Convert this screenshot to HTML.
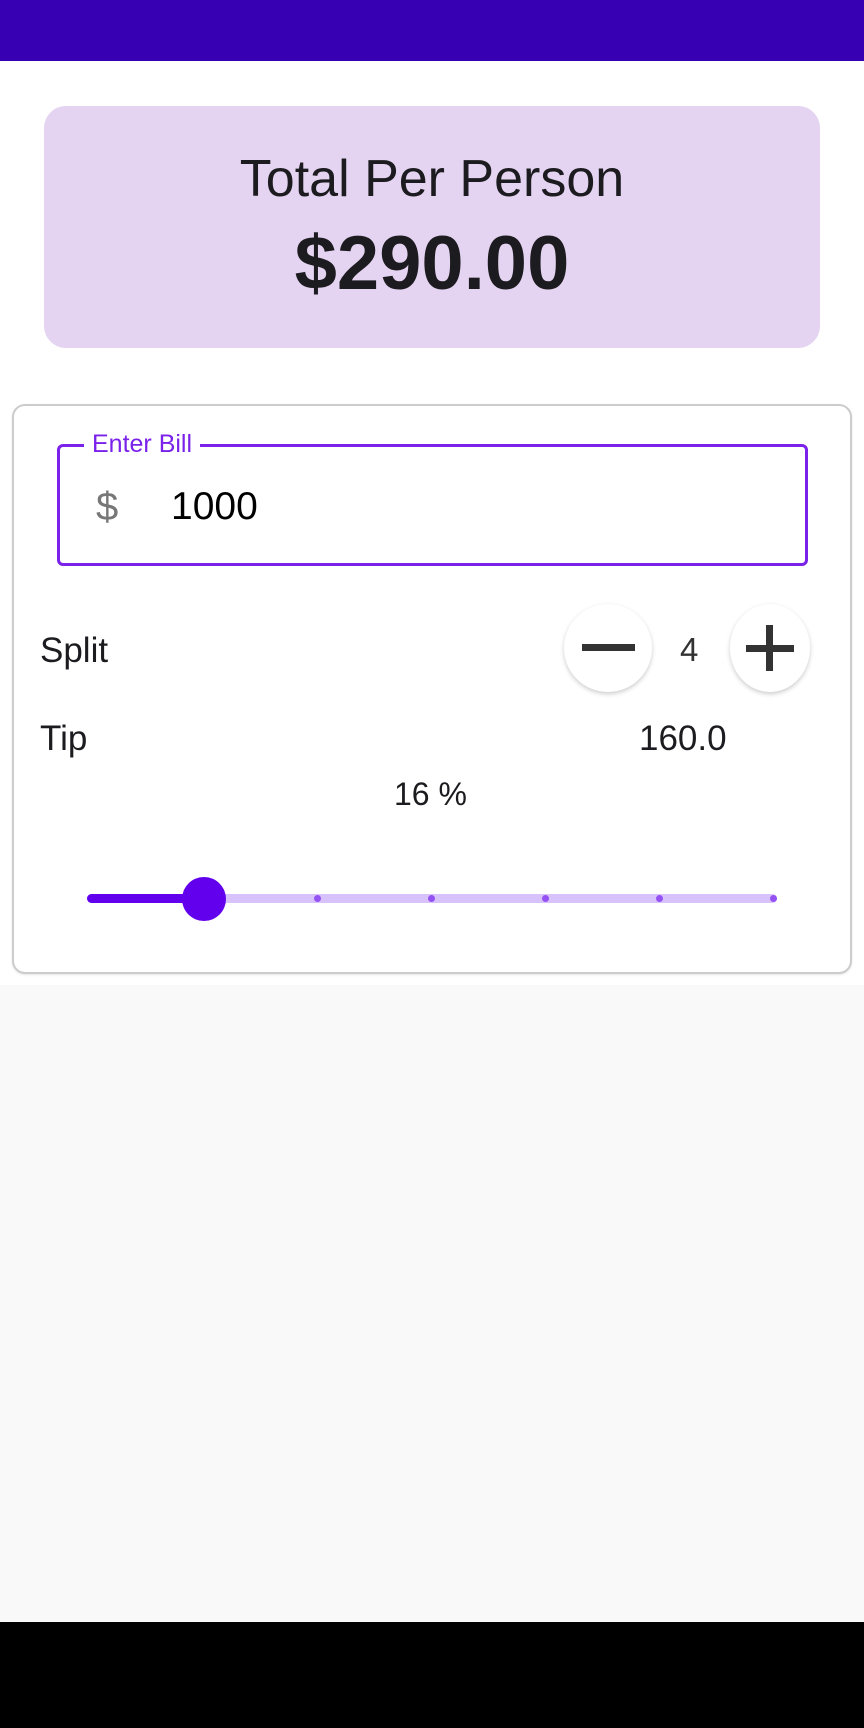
<!DOCTYPE html>
<html><head><meta charset="utf-8"><style>
*{margin:0;padding:0;box-sizing:border-box}
body{width:864px;height:1728px;background:#fff;font-family:"Liberation Sans",sans-serif;position:relative;overflow:hidden;color:#1c1b1f}
.a{position:absolute}
</style></head><body>
<div class="a" style="left:0;top:0;width:864px;height:61px;background:#3700b3"></div>
<div class="a" style="left:44px;top:106px;width:776px;height:242px;background:#e5d4f1;border-radius:22px"></div>
<div class="a" style="left:44px;top:149px;width:776px;text-align:center;font-size:52px;line-height:60px">Total Per Person</div>
<div class="a" style="left:44px;top:221px;width:776px;text-align:center;font-size:76px;font-weight:bold;line-height:86px">$290.00</div>
<div class="a" style="left:12px;top:404px;width:840px;height:570px;border:2px solid #ccc;border-radius:13px;box-shadow:0 1px 2px rgba(0,0,0,.1)"></div>
<div class="a" style="left:57px;top:444px;width:751px;height:122px;border:3px solid #7a22ea;border-radius:6px"></div>
<div class="a" style="left:84px;top:429px;padding:0 8px;background:#fff;color:#7a22ea;font-size:25px;line-height:30px">Enter Bill</div>
<div class="a" style="left:96px;top:484px;color:#777;font-size:40px;line-height:46px">$</div>
<div class="a" style="left:171px;top:484px;color:#000;font-size:39px;line-height:46px">1000</div>
<div class="a" style="left:40px;top:631px;font-size:35px;line-height:40px">Split</div>
<div class="a" style="left:564px;top:604px;width:88px;height:88px;border-radius:50%;background:#fff;box-shadow:0 2px 5px rgba(0,0,0,.2)"></div>
<div class="a" style="left:582px;top:644px;width:53px;height:7px;background:#333"></div>
<div class="a" style="left:680px;top:630px;font-size:33px;line-height:40px;color:#333">4</div>
<div class="a" style="left:730px;top:604px;width:80px;height:88px;border-radius:50%;background:#fff;box-shadow:0 2px 5px rgba(0,0,0,.2)"></div>
<div class="a" style="left:746px;top:645px;width:48px;height:7px;background:#333"></div>
<div class="a" style="left:766px;top:625px;width:7px;height:46px;background:#333"></div>
<div class="a" style="left:40px;top:719px;font-size:35px;line-height:40px">Tip</div>
<div class="a" style="left:639px;top:719px;font-size:35px;line-height:40px">160.0</div>
<div class="a" style="left:394px;top:774px;font-size:32px;line-height:40px">16 %</div>
<div class="a" style="left:87px;top:894px;width:690px;height:9px;border-radius:5px;background:#d8c2fb"></div>
<div class="a" style="left:87px;top:894px;width:118px;height:9px;border-radius:5px;background:#6200ee"></div>
<div class="a" style="left:314px;top:895px;width:7px;height:7px;border-radius:50%;background:#9452f3"></div>
<div class="a" style="left:428px;top:895px;width:7px;height:7px;border-radius:50%;background:#9452f3"></div>
<div class="a" style="left:542px;top:895px;width:7px;height:7px;border-radius:50%;background:#9452f3"></div>
<div class="a" style="left:656px;top:895px;width:7px;height:7px;border-radius:50%;background:#9452f3"></div>
<div class="a" style="left:770px;top:895px;width:7px;height:7px;border-radius:50%;background:#9452f3"></div>
<div class="a" style="left:182px;top:877px;width:44px;height:44px;border-radius:50%;background:#6200ee"></div>
<div class="a" style="left:0;top:985px;width:864px;height:638px;background:#f9f9f9"></div>
<div class="a" style="left:0;top:1622px;width:864px;height:106px;background:#000"></div>
</body></html>
